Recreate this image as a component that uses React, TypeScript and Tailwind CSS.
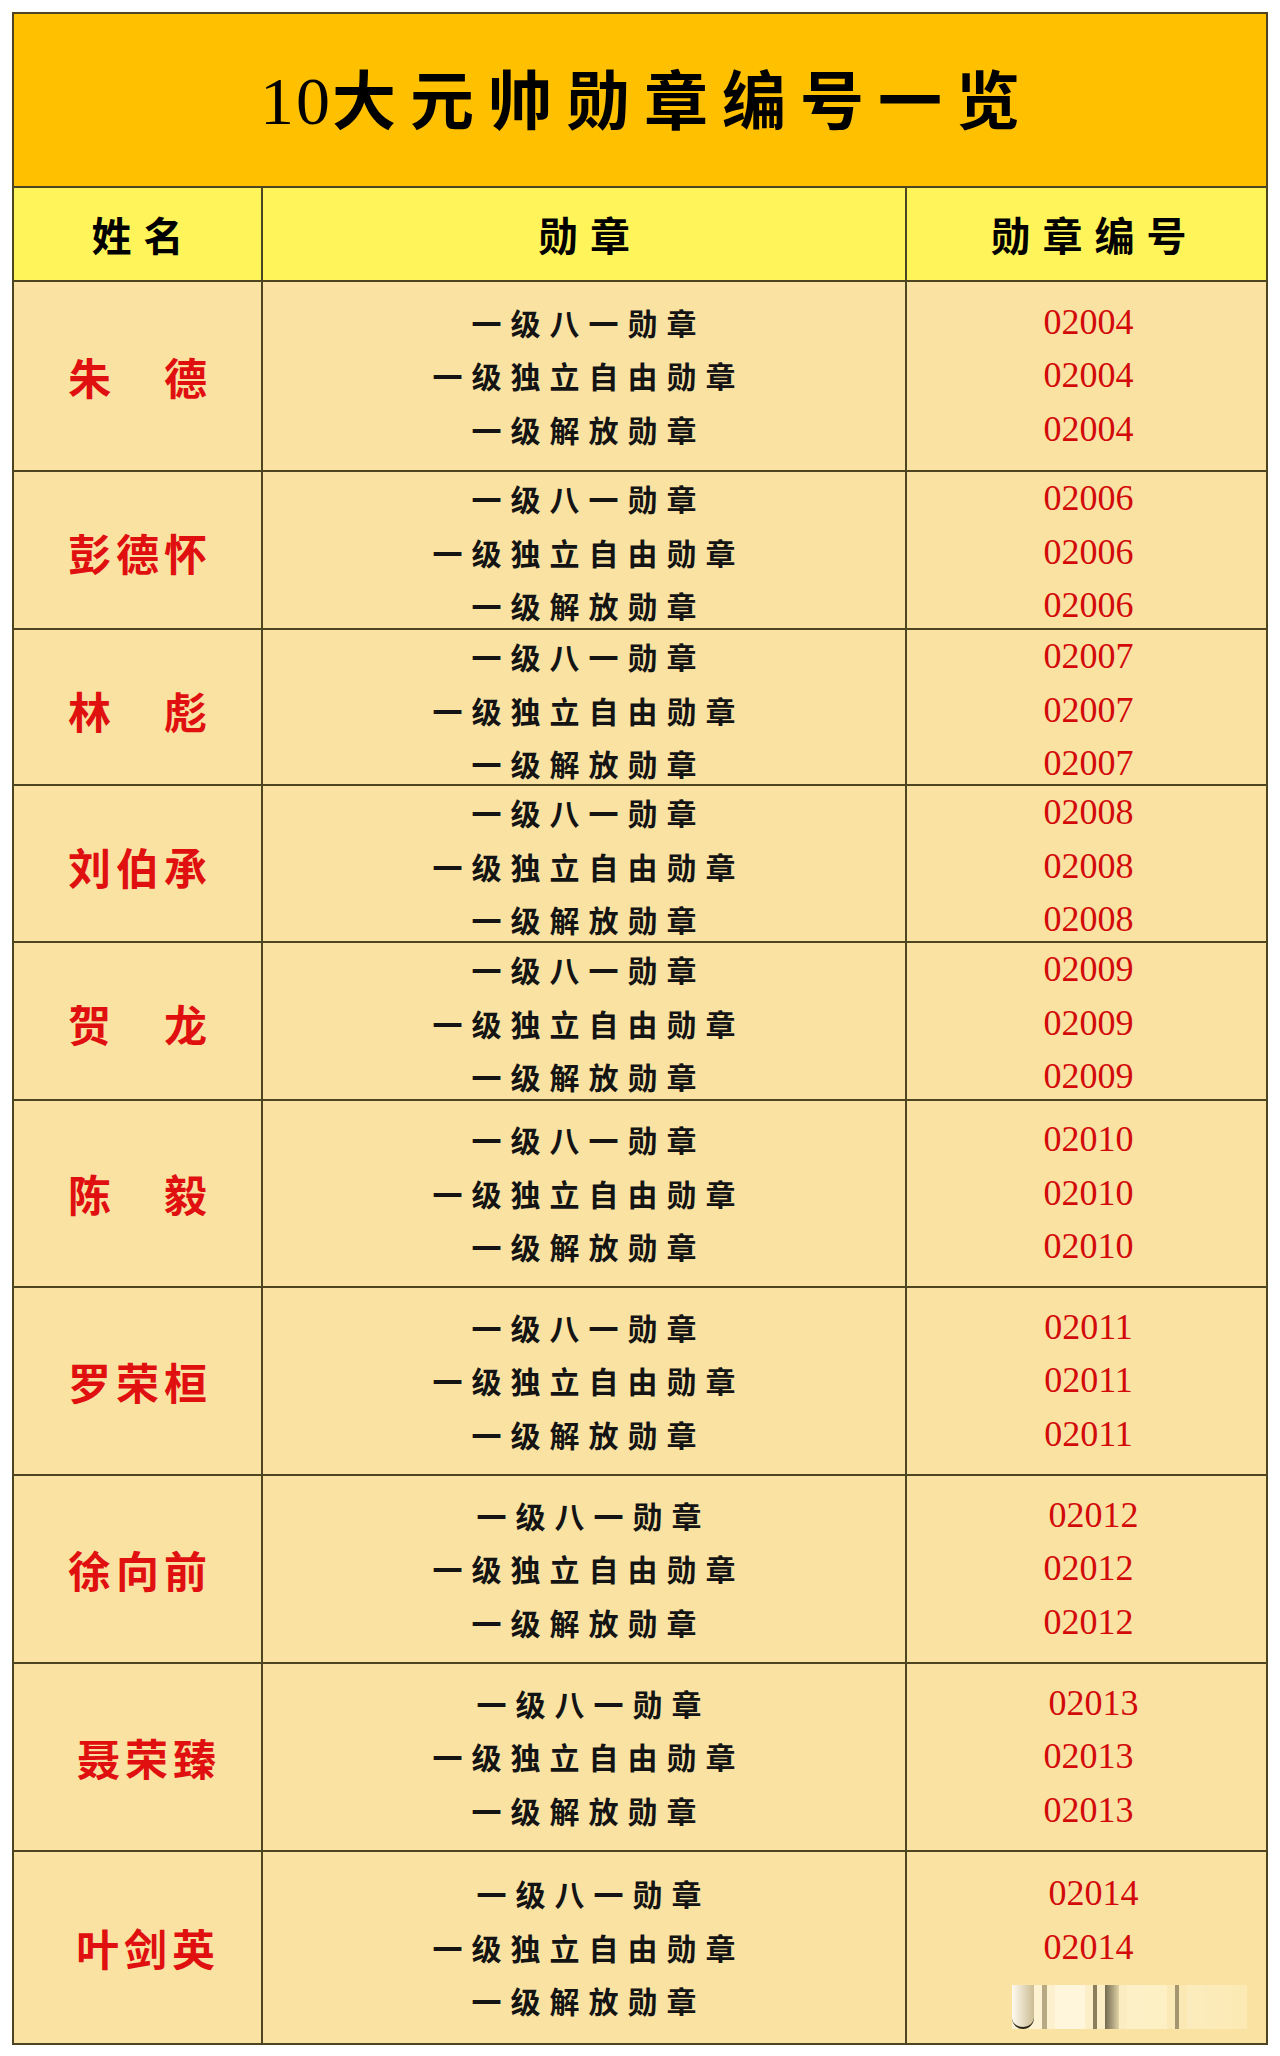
const cjk = "font-['Noto_Sans_CJK_SC','Noto_Sans_CJK_JP',sans-serif]";

type Row = {
  name: string;
  code: string;
  h: string;
  nameShift?: string;
  shift?: boolean;
};

const rows: Row[] = [
  { name: "朱　德", code: "02004", h: "h-[190px]" },
  { name: "彭德怀", code: "02006", h: "h-[158px]" },
  { name: "林　彪", code: "02007", h: "h-[156px]" },
  { name: "刘伯承", code: "02008", h: "h-[157px]" },
  { name: "贺　龙", code: "02009", h: "h-[158px]" },
  { name: "陈　毅", code: "02010", h: "h-[187px]" },
  { name: "罗荣桓", code: "02011", h: "h-[188px]" },
  { name: "徐向前", code: "02012", h: "h-[188px]", shift: true },
  { name: "聂荣臻", code: "02013", h: "h-[188px]", nameShift: "pl-[18px]", shift: true },
  { name: "叶剑英", code: "02014", h: "h-[191px]", nameShift: "pl-[16px]", shift: true },
];

const medals = ["一级八一勋章", "一级独立自由勋章", "一级解放勋章"];

function MedalRow({ row, last }: { row: Row; last: boolean }) {
  return (
    <div
      className={`grid grid-cols-[249px_644px_363px] ${row.h} ${last ? "" : "border-b-2"} border-[#4d4422] bg-[#fae3a2]`}
    >
      <div className={`flex items-center justify-center border-r-2 border-[#4d4422] ${row.nameShift ?? ""}`}>
        <span className={`${cjk} text-[43px] font-bold tracking-[5px] pl-[5px] text-[#e01010]`}>{row.name}</span>
      </div>
      <div className="flex flex-col items-center justify-center border-r-2 border-[#4d4422]">
        {medals.map((m, i) => (
          <div
            key={m}
            className={`${cjk} text-[30px] font-semibold leading-[53.5px] tracking-[9px] text-[#141414] ${
              row.shift && i === 0 ? "pl-[19px]" : "pl-[9px]"
            }`}
          >
            {m}
          </div>
        ))}
      </div>
      <div className="flex flex-col items-center justify-center">
        {medals.map((m, i) => (
          <div
            key={m}
            className={`font-['Liberation_Serif',serif] text-[36px] leading-[53.5px] text-[#d20a0a] ${
              row.shift && i === 0 ? "pl-[10px]" : ""
            } ${last && i === 2 ? "invisible" : ""}`}
          >
            {row.code}
          </div>
        ))}
      </div>
    </div>
  );
}

export default function App() {
  return (
    <div className="min-h-[2056px] w-[1280px] bg-white pt-[12px] pl-[12px]">
      <div className="relative w-[1256px] border-2 border-[#4d4422]">
        <div className="flex h-[174px] items-center justify-center border-b-2 border-[#4d4422] bg-[#ffc000]">
          <h1 className={`${cjk} text-[64px] font-bold tracking-[14px] pl-[14px] text-black`}>
            <span className="font-['Liberation_Serif',serif] text-[68px] font-normal tracking-[2px]">10</span>
            大元帅勋章编号一览
          </h1>
        </div>
        <div className="grid h-[94px] grid-cols-[249px_644px_363px] border-b-2 border-[#4d4422] bg-[#fff55a]">
          <div className="flex items-center justify-center border-r-2 border-[#4d4422]">
            <span className={`${cjk} text-[40px] font-semibold tracking-[12px] pl-[12px]`}>姓名</span>
          </div>
          <div className="flex items-center justify-center border-r-2 border-[#4d4422]">
            <span className={`${cjk} text-[40px] font-semibold tracking-[12px] pl-[12px]`}>勋章</span>
          </div>
          <div className="flex items-center justify-center">
            <span className={`${cjk} text-[40px] font-semibold tracking-[12px] pl-[12px]`}>勋章编号</span>
          </div>
        </div>
        {rows.map((r, i) => (
          <MedalRow key={r.code} row={r} last={i === rows.length - 1} />
        ))}
        {/* blurred watermark remnants, bottom right */}
        <div className="pointer-events-none absolute bottom-[14px] right-[14px] flex h-[44px] w-[240px] items-stretch gap-[8px] bg-gradient-to-r from-[#fdf3d6] via-[#fbecc0] to-[#fae3a2]">
          <div className="w-[22px] rounded-b-full border-b-2 border-[#2a2415] bg-gradient-to-r from-[#fffaf0] to-[#cbbd94]" />
          <div className="w-[5px] bg-[#8a7a50]/60" />
          <div className="w-[30px] bg-[#fff6dc]" />
          <div className="w-[4px] bg-[#5a4f30]/70" />
          <div className="w-[14px] bg-gradient-to-r from-[#3a3320]/70 to-[#c9b98a]/50" />
          <div className="w-[40px] bg-[#fff3cc]/60" />
          <div className="w-[4px] bg-[#6a5f40]/60" />
          <div className="w-[60px] bg-[#fff3cc]/40" />
        </div>
      </div>
    </div>
  );
}
